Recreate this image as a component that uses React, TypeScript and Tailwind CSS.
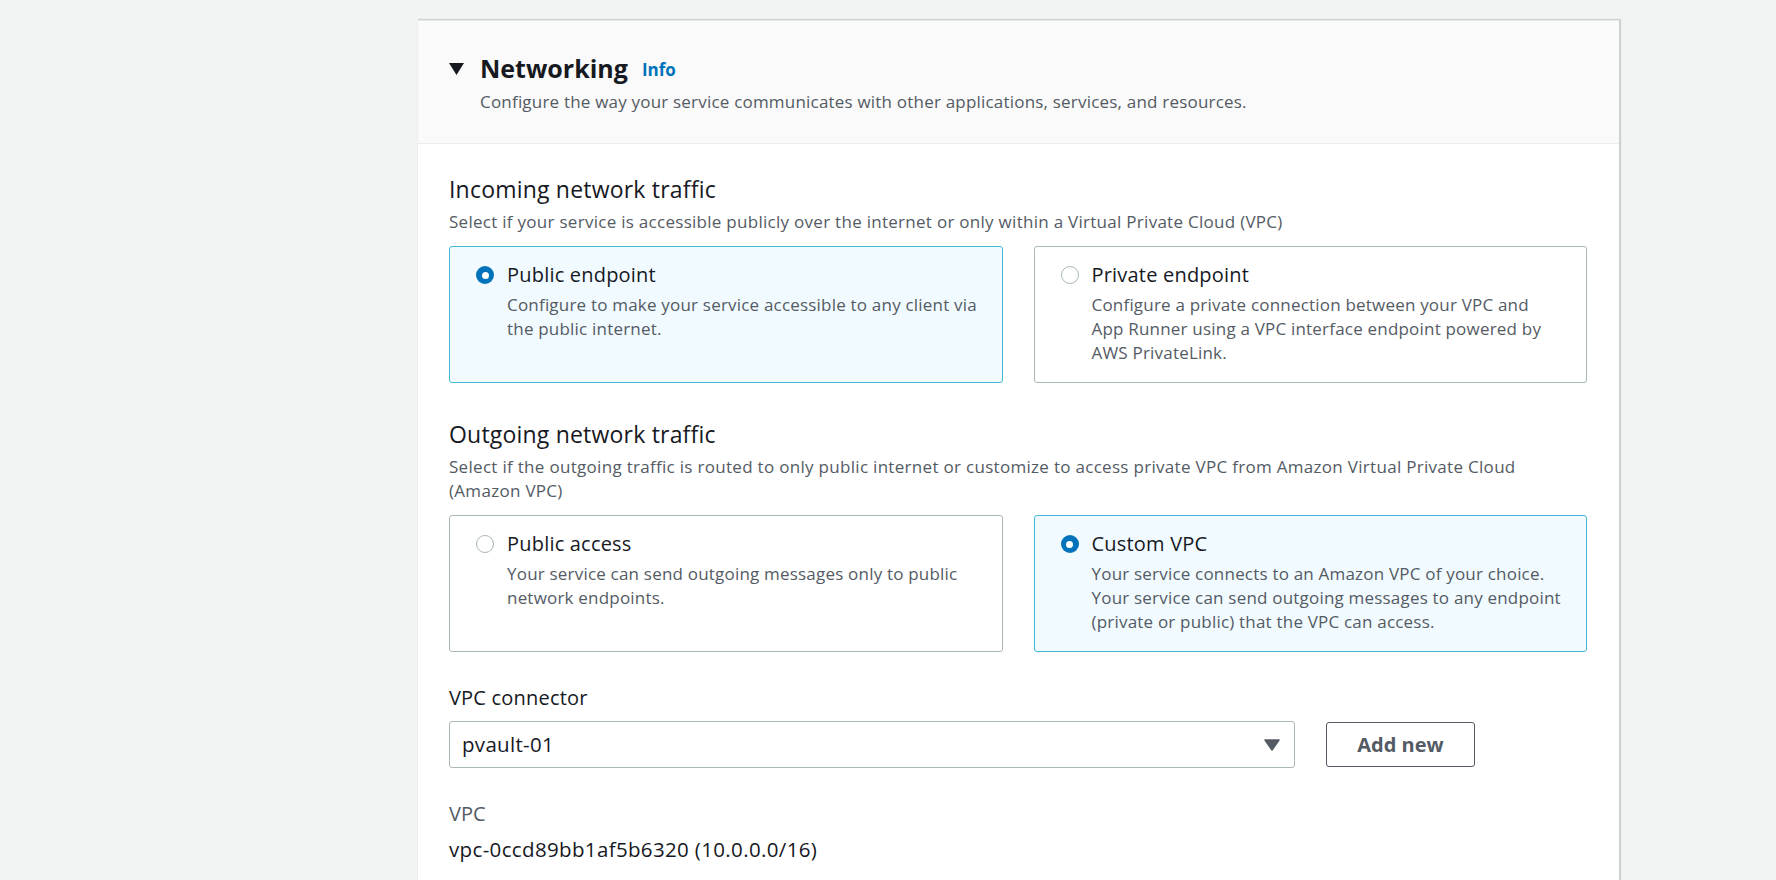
import React from "react";

const font = { fontFamily: "'Open Sans', 'Noto Sans', sans-serif" };

function Radio({ checked }: { checked: boolean }) {
  return checked ? (
    <span className="flex h-[18px] w-[18px] shrink-0 items-center justify-center rounded-full bg-[#0073bb]">
      <span className="h-[7px] w-[7px] rounded-full bg-white" />
    </span>
  ) : (
    <span className="h-[18px] w-[18px] shrink-0 rounded-full border-[1.5px] border-[#aab7b8] bg-white" />
  );
}

function Tile({
  checked,
  title,
  desc,
}: {
  checked: boolean;
  title: string;
  desc: React.ReactNode;
}) {
  return (
    <div
      className={
        "rounded-[3px] border pl-[26px] pr-4 pt-[16px] pb-[17px] " +
        (checked ? "border-[#44b9d6] bg-[#f1faff]" : "border-[#aab7b8] bg-white")
      }
    >
      <div className="flex items-center gap-[13px]">
        <Radio checked={checked} />
        <div className="text-[20px] leading-6 tracking-[0.2px] text-[#16191f]">{title}</div>
      </div>
      <div className="ml-[31px] mt-[6px] text-[17px] leading-6 tracking-[0.2px] text-[#545b64]">{desc}</div>
    </div>
  );
}

export default function App() {
  return (
    <div className="min-h-[880px] bg-[#f2f3f3] pl-[418px] pt-[20px]" style={font}>
      <div className="w-[1201px] border-t border-[#e8eaea] bg-white shadow-[1px_0_1px_1px_rgba(0,28,36,0.15)]">
        <div className="border-b border-[#eaeded] bg-[#fafafa] pl-[31px] pr-8 pt-[31px] pb-[30px]">
          <div className="flex items-center">
            <svg width="15" height="12" viewBox="0 0 15 12" className="mr-4 mt-[1px]">
              <path d="M0 0 L15 0 L7.5 12 Z" fill="#16191f" />
            </svg>
            <h2 className="text-[25px] font-bold leading-8 text-[#16191f]">Networking</h2>
            <span className="ml-[14px] mt-[3px] text-[17px] font-bold text-[#0073bb]">Info</span>
          </div>
          <p className="ml-[31px] mt-[7px] text-[17px] leading-[22px] tracking-[0.2px] text-[#545b64]">
            Configure the way your service communicates with other applications, services, and resources.
          </p>
        </div>

        <div className="px-[31px] pt-[31px] pb-10">
          <h3 className="text-[23px] leading-7 tracking-[0.2px] text-[#16191f]">Incoming network traffic</h3>
          <p className="mt-[7px] text-[17px] leading-6 tracking-[0.28px] text-[#545b64]">
            Select if your service is accessible publicly over the internet or only within a Virtual Private Cloud (VPC)
          </p>
          <div className="mt-[12px] grid grid-cols-2 gap-[31px] pr-px">
            <Tile
              checked
              title="Public endpoint"
              desc={<>Configure to make your service accessible to any client via<br />the public internet.</>}
            />
            <Tile
              checked={false}
              title="Private endpoint"
              desc={
                <>
                  Configure a private connection between your VPC and
                  <br />
                  App Runner using a VPC interface endpoint powered by
                  <br />
                  AWS PrivateLink.
                </>
              }
            />
          </div>

          <h3 className="mt-[37px] text-[23px] leading-7 tracking-[0.2px] text-[#16191f]">Outgoing network traffic</h3>
          <p className="mt-[7px] text-[17px] leading-6 tracking-[0.3px] text-[#545b64]">
            Select if the outgoing traffic is routed to only public internet or customize to access private VPC from Amazon Virtual Private Cloud
            <br />
            (Amazon VPC)
          </p>
          <div className="mt-[12px] grid grid-cols-2 gap-[31px] pr-px">
            <Tile
              checked={false}
              title="Public access"
              desc={<>Your service can send outgoing messages only to public<br />network endpoints.</>}
            />
            <Tile
              checked
              title="Custom VPC"
              desc={
                <>
                  Your service connects to an Amazon VPC of your choice.
                  <br />
                  Your service can send outgoing messages to any endpoint
                  <br />
                  (private or public) that the VPC can access.
                </>
              }
            />
          </div>

          <div className="mt-[34px] text-[20px] leading-6 tracking-[0.2px] text-[#16191f]">VPC connector</div>
          <div className="mt-[11px] flex items-center gap-[31px]">
            <div className="flex h-[47px] w-[846px] items-center justify-between rounded-[3px] border border-[#aab7b8] bg-white pl-3 pr-[14px]">
              <span className="text-[20.5px] tracking-[0.3px] text-[#16191f]">pvault-01</span>
              <svg width="16" height="12" viewBox="0 0 16 12">
                <path d="M1 1 L15 1 L8 11 Z" fill="#545b64" stroke="#545b64" strokeWidth="1.5" strokeLinejoin="round" />
              </svg>
            </div>
            <button className="h-[45px] w-[149px] rounded-[3px] border border-[#545b64] bg-white text-[20px] font-bold text-[#545b64]">
              Add new
            </button>
          </div>

          <div className="mt-[34px] text-[20px] leading-6 text-[#545b64]">VPC</div>
          <div className="mt-[11px] text-[20.5px] leading-6 tracking-[0.35px] text-[#16191f]">vpc-0ccd89bb1af5b6320 (10.0.0.0/16)</div>
        </div>
      </div>
    </div>
  );
}
